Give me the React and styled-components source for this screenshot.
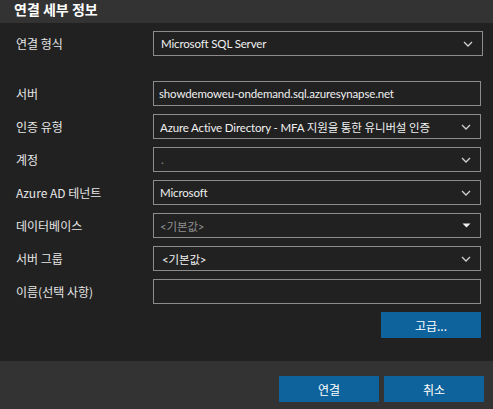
import React from "react";
import styled, { createGlobalStyle } from "styled-components";

const Global = createGlobalStyle`
  html, body { margin: 0; padding: 0; background: #212121; }
  body { font-family: "Noto Sans", "Noto Sans CJK KR", sans-serif; }
`;

const Dialog = styled.div`
  width: 493px;
  height: 409px;
  display: flex;
  flex-direction: column;
  background: #212121;
  color: #e6e6e6;
  overflow: hidden;
`;

const Header = styled.div`
  height: 23px;
  flex: none;
  background: #333333;
  display: flex;
  align-items: flex-start;
  padding: 1px 0 0 14px;
  box-sizing: border-box;
`;

const Title = styled.h1`
  margin: 0;
  font-family: "Noto Sans CJK KR", "Noto Sans", sans-serif;
  font-weight: 700;
  font-size: 14px;
  line-height: 16px;
  color: #ffffff;
`;

const Form = styled.div`
  flex: 1;
  display: grid;
  grid-template-columns: 153px 1fr;
  grid-template-rows: 25px 9px;
  grid-auto-rows: 25px;
  row-gap: 8px;
  padding: 8px 12px 0 0;
  box-sizing: border-box;
  align-content: start;
`;

const Label = styled.div`
  padding-left: 16px;
  font-size: 12px;
  color: #e6e6e6;
  display: flex;
  align-items: center;
  white-space: nowrap;
  font-family: "Noto Sans CJK KR", "Noto Sans", sans-serif;
`;

const Spacer = styled.div`
  grid-column: 1 / span 2;
`;

const Box = styled.div`
  box-sizing: border-box;
  height: 25px;
  width: ${(p) => (p.$wide ? "330px" : "328px")};
  border: 1px solid #8c8c8c;
  display: flex;
  align-items: center;
  padding-left: ${(p) => p.$pad || 6}px;
  padding-right: 9px;
  font-size: 11.5px;
  letter-spacing: -0.15px;
  color: ${(p) => (p.$muted ? "#8f8f8f" : "#f0f0f0")};
  white-space: nowrap;
  font-family: Lato, "Noto Sans CJK KR", sans-serif;
`;

const Value = styled.span`
  flex: 1;
  overflow: hidden;
`;

const ButtonRow = styled.div`
  grid-column: 2;
  display: flex;
  justify-content: flex-end;
  width: 328px;
`;

const Button = styled.button`
  width: 100px;
  height: 26px;
  border: none;
  background: #0f639c;
  color: #ffffff;
  font-family: "Noto Sans CJK KR", "Noto Sans", sans-serif;
  font-size: 12px;
  padding: 0;
  cursor: pointer;
`;

const Footer = styled.div`
  height: 48px;
  flex: none;
  background: #333333;
  display: flex;
  justify-content: flex-end;
  gap: 5px;
  padding: 15px 9px 0 0;
  box-sizing: border-box;
`;

const Chevron = () => (
  <svg width="10" height="6" viewBox="0 0 10 6" fill="none">
    <path d="M1 1 L5 5 L9 1" stroke="#d0d0d0" strokeWidth="1.3" />
  </svg>
);

const Caret = () => (
  <svg width="9" height="5" viewBox="0 0 9 5">
    <path d="M0.5 0.5 L8.5 0.5 L4.5 4.5 Z" fill="#f0f0f0" />
  </svg>
);

export default function App() {
  return (
    <Dialog>
      <Global />
      <Header>
        <Title>연결 세부 정보</Title>
      </Header>
      <Form>
        <Label>연결 형식</Label>
        <Box $wide $pad={7}>
          <Value>Microsoft SQL Server</Value>
          <Chevron />
        </Box>
        <Spacer />
        <Label>서버</Label>
        <Box $pad={5}>
          <Value>showdemoweu-ondemand.sql.azuresynapse.net</Value>
        </Box>
        <Label>인증 유형</Label>
        <Box $pad={6}>
          <Value>Azure Active Directory - MFA 지원을 통한 유니버설 인증</Value>
          <Chevron />
        </Box>
        <Label>계정</Label>
        <Box $muted $pad={7}>
          <Value>.</Value>
          <Chevron />
        </Box>
        <Label>Azure AD 테넌트</Label>
        <Box $pad={6}>
          <Value>Microsoft</Value>
          <Chevron />
        </Box>
        <Label>데이터베이스</Label>
        <Box $muted $pad={6}>
          <Value>&lt;기본값&gt;</Value>
          <Caret />
        </Box>
        <Label>서버 그룹</Label>
        <Box $pad={8}>
          <Value>&lt;기본값&gt;</Value>
          <Chevron />
        </Box>
        <Label>이름(선택 사항)</Label>
        <Box />
        <ButtonRow>
          <Button>고급...</Button>
        </ButtonRow>
      </Form>
      <Footer>
        <Button>연결</Button>
        <Button>취소</Button>
      </Footer>
    </Dialog>
  );
}
